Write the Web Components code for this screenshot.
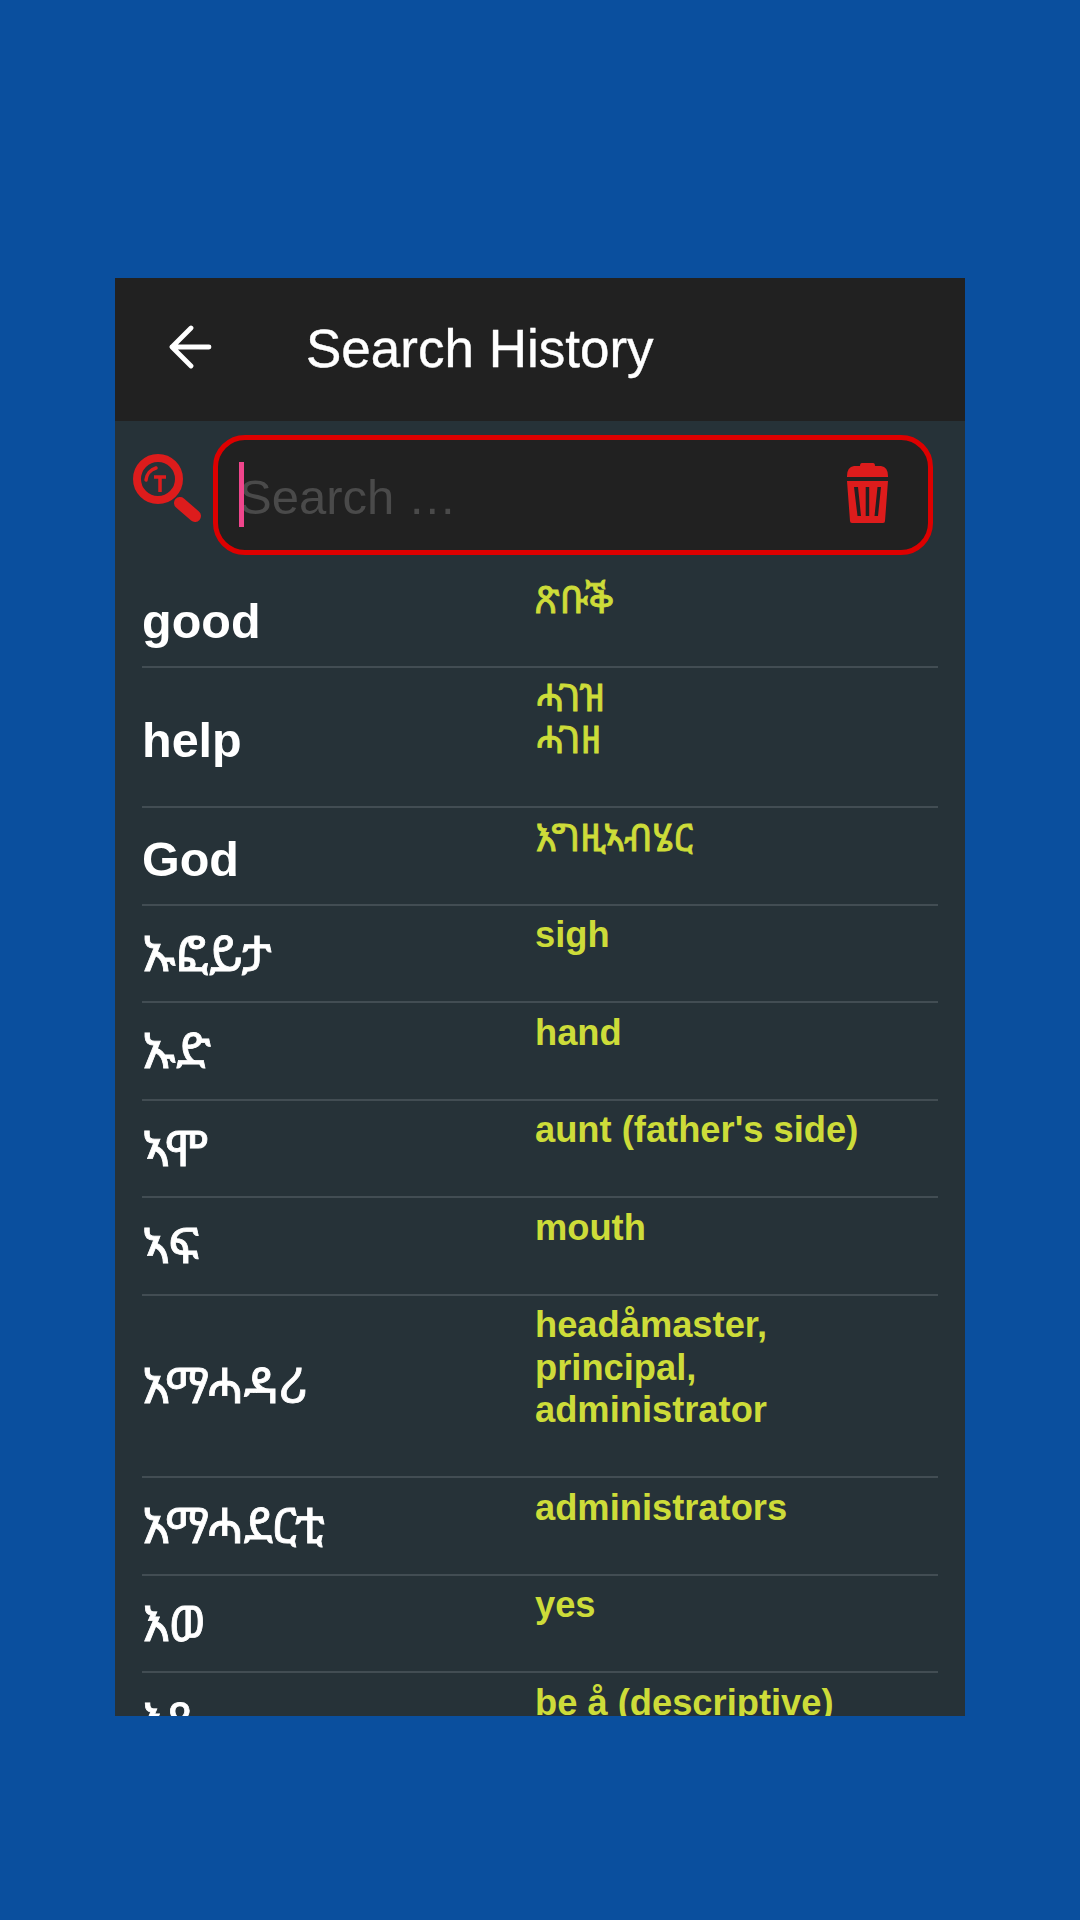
<!DOCTYPE html>
<html>
<head>
<meta charset="utf-8">
<title>Search History</title>
<style>
  html, body { margin: 0; height: 100%; }
  body {
    background: #0a4f9e;
    font-family: "Liberation Sans", "Noto Sans Ethiopic", "DejaVu Sans", sans-serif;
    padding: 278px 115px 0;
    box-sizing: border-box;
    height: 1920px;
    overflow: hidden;
  }
</style>
</head>
<body>
<app-screen>
  <app-bar slot="bar">Search History</app-bar>
  <search-bar slot="search" placeholder="Search …"></search-bar>
  <history-row><span slot="word">good</span><div class="et">ጽቡቕ</div></history-row>
  <history-row><span slot="word">help</span><div class="et">ሓገዝ</div><div class="et">ሓገዘ</div></history-row>
  <history-row><span slot="word">God</span><div class="et">እግዚኣብሄር</div></history-row>
  <history-row><span slot="word" class="et">ኡፎይታ</span><div>sigh</div></history-row>
  <history-row><span slot="word" class="et">ኡድ</span><div>hand</div></history-row>
  <history-row><span slot="word" class="et">ኣሞ</span><div>aunt (father's side)</div></history-row>
  <history-row><span slot="word" class="et">ኣፍ</span><div>mouth</div></history-row>
  <history-row><span slot="word" class="et">አማሓዳሪ</span><div>headåmaster,</div><div>principal,</div><div>administrator</div></history-row>
  <history-row><span slot="word" class="et">አማሓደርቲ</span><div>administrators</div></history-row>
  <history-row><span slot="word" class="et">እወ</span><div>yes</div></history-row>
  <history-row><span slot="word" class="et">እዩ</span><div>be å (descriptive)</div></history-row>
</app-screen>

<script>
class AppScreen extends HTMLElement {
  constructor() {
    super();
    this.attachShadow({ mode: 'open' });
    this.shadowRoot.innerHTML = `
      <style>
        :host {
          display: flex;
          flex-direction: column;
          width: 850px;
          height: 1438px;
          background: #263238;
          overflow: hidden;
        }
        .list { display: flex; flex-direction: column; padding: 0 27px; }
      </style>
      <slot name="bar"></slot>
      <slot name="search"></slot>
      <div class="list"><slot></slot></div>
    `;
  }
}

class AppBar extends HTMLElement {
  constructor() {
    super();
    this.attachShadow({ mode: 'open' });
    this.shadowRoot.innerHTML = `
      <style>
        :host {
          display: flex;
          align-items: center;
          height: 143px;
          flex: none;
          background: #212121;
          color: #fff;
          font-size: 53px;
        }
        svg { margin: -6px 0 0 53px; flex: none; }
        .title { margin: -2px 0 0 94px; -webkit-text-stroke: .4px #fff; }
      </style>
      <svg width="44" height="44" viewBox="0 0 44 44" fill="none" stroke="#fff" stroke-width="4.8" stroke-linecap="round" stroke-linejoin="round">
        <path d="M41 22H4M23 3L4 22l19 19"/>
      </svg>
      <div class="title"><slot></slot></div>
    `;
  }
}

class SearchBar extends HTMLElement {
  constructor() {
    super();
    this.attachShadow({ mode: 'open' });
    this.shadowRoot.innerHTML = `
      <style>
        :host {
          display: flex;
          align-items: flex-start;
          flex: none;
          padding: 14px 32px 15.5px 18px;
        }
        .lens { margin: 19px 10px 0 0; flex: none; }
        .box {
          flex: 1;
          display: flex;
          align-items: center;
          box-sizing: border-box;
          height: 120px;
          padding: 0 40px 0 21px;
          background: #212121;
          border: 5px solid #dd0000;
          border-radius: 32px;
        }
        .field { flex: 1; position: relative; color: #4a4a4a; font-size: 49px; margin-top: 1px; padding-top: 3px; }
        .caret {
          position: absolute;
          left: 0;
          top: -4px;
          width: 5px;
          height: 65px;
          background: #f0458c;
        }
        .trash { flex: none; margin-top: -4px; }
      </style>
      <svg class="lens" width="70" height="70" viewBox="0 0 70 70" fill="none" stroke="#dd1c1c">
        <circle cx="25" cy="25" r="21" stroke-width="8"/>
        <path d="M47 49l15 13" stroke-width="12" stroke-linecap="round"/>
        <path d="M13 26a14 14 0 0 1 10-12" stroke-width="3.5" stroke-linecap="round"/>
        <path d="M21 23h12M27 23v15" stroke-width="3.5"/>
      </svg>
      <div class="box">
        <div class="field"><span class="caret"></span><span class="ph"></span></div>
        <svg class="trash" width="41" height="60" viewBox="0 0 41 60" fill="#dd1c1c">
          <path d="M15 0h11q2 0 2 3h6q7 1 7 10v1H0v-1q0-9 7-10h6q0-3 2-3z"/>
          <path fill-rule="evenodd" d="M0 18h41l-3 40q0 2-2 2H5q-2 0-2-2zM7 24l3.5 29h3.5L11 24zM18.7 24v29h3.5V24zM30.5 24l-3 29h3.5l3-29z"/>
        </svg>
      </div>
    `;
  }
  connectedCallback() {
    this.shadowRoot.querySelector('.ph').textContent = this.getAttribute('placeholder');
  }
}

class HistoryRow extends HTMLElement {
  constructor() {
    super();
    this.attachShadow({ mode: 'open' });
    this.shadowRoot.innerHTML = `
      <style>
        :host {
          display: grid;
          grid-template-columns: 393px 1fr;
          align-items: start;
          box-sizing: border-box;
          padding: 8.5px 0 44.5px;
          border-bottom: 2px solid #424d53;
          font-weight: bold;
        }
        .word {
          align-self: center;
          color: #fff;
          font-size: 48.5px;
          line-height: 56px;
          margin-bottom: -35.4px;
          padding-top: 2px;
        }
        .meaning { color: #cddc39; font-size: 36.3px; line-height: 42.5px; }
        .word ::slotted(:not(.et)) { display: block; padding-top: 4.6px; }
        /* the Ethiopic face is drawn as regular with a thin stroke, real bold comes out too wide */
        ::slotted(.et) { font-weight: normal; -webkit-text-stroke: .8px; }
        .word ::slotted(.et) { font-size: 49.5px; }
        .meaning ::slotted(.et) { font-size: 38.4px; }
      </style>
      <div class="word"><slot name="word"></slot></div>
      <div class="meaning"><slot></slot></div>
    `;
  }
}

customElements.define('app-screen', AppScreen);
customElements.define('app-bar', AppBar);
customElements.define('search-bar', SearchBar);
customElements.define('history-row', HistoryRow);
</script>
</body>
</html>
